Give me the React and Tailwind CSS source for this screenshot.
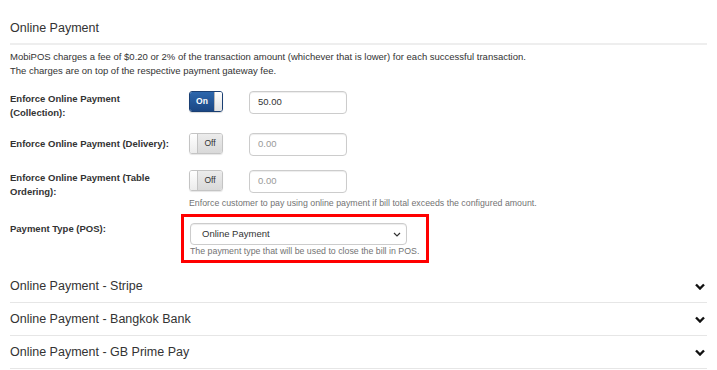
const Toggle = ({ on }) => {
    if (on) {
        return (
            <div className="flex w-[34px] h-[21px] rounded-[3px] border border-[#1a3f73] overflow-hidden shadow-[0_1px_1px_rgba(0,0,0,0.15)]">
                <div className="flex-1 flex items-center justify-center bg-gradient-to-b from-[#2d67ad] to-[#1b4784] text-white text-[8.5px] font-bold">On</div>
                <div className="w-[8px] bg-gradient-to-b from-[#ffffff] to-[#e2e2e2] border-l border-[#b8b8b8]"></div>
            </div>
        );
    }
    return (
        <div className="flex w-[34px] h-[21px] rounded-[3px] border border-[#c4c4c4] overflow-hidden shadow-[0_1px_1px_rgba(0,0,0,0.1)]">
            <div className="w-[8px] bg-gradient-to-b from-[#ffffff] to-[#ececec] border-r border-[#c4c4c4]"></div>
            <div className="flex-1 flex items-center justify-center bg-gradient-to-b from-[#ececec] to-[#d9d9d9] text-[#333] text-[8.5px]">Off</div>
        </div>
    );
};

const Field = ({ value, placeholder }) => (
    <div className="ml-[26px] w-[98px] h-[23px] rounded-[4px] border border-[#cccccc] shadow-[inset_0_1px_1px_rgba(0,0,0,0.075)] flex items-center px-[8px] text-[9.5px]">
        {value ? <span className="text-[#333]">{value}</span> : <span className="text-[#999]">{placeholder}</span>}
    </div>
);

const Label = ({ children, className }) => (
    <div className={`w-[179px] shrink-0 ${className}`}>
        <div className="w-[164px] text-[9.5px] leading-[14px] font-bold">{children}</div>
    </div>
);

const Chevron = () => (
    <svg width="10" height="7" viewBox="0 0 10 7" fill="none">
        <path d="M1 1.5 L5 5.5 L9 1.5" stroke="#111" strokeWidth="2.4" />
    </svg>
);

const sections = ["Online Payment - Stripe", "Online Payment - Bangkok Bank", "Online Payment - GB Prime Pay"];

export default function App() {
    return (
        <div className="w-[717px] h-[370px] overflow-hidden bg-white px-[10px] text-[#333]" style={{ fontFamily: '"Liberation Sans", Arial, sans-serif' }}>
            <div className="pt-[20px] pb-[7px] border-b-2 border-[#eeeeee] text-[12.5px] leading-[16px]">Online Payment</div>

            <div className="mt-[5px] text-[9.5px] leading-[14px]">
                <div>MobiPOS charges a fee of $0.20 or 2% of the transaction amount (whichever that is lower) for each successful transaction.</div>
                <div>The charges are on top of the respective payment gateway fee.</div>
            </div>

            <div className="mt-[13px] flex items-start mb-[13px]">
                <Label className="pt-[1px]">Enforce Online Payment (Collection):</Label>
                <Toggle on />
                <Field value="50.00" />
            </div>

            <div className="flex items-start mb-[14px]">
                <Label className="pt-[4px]">Enforce Online Payment (Delivery):</Label>
                <Toggle />
                <Field placeholder="0.00" />
            </div>

            <div className="flex items-start">
                <Label className="pt-[1px]">Enforce Online Payment (Table Ordering):</Label>
                <div className="flex flex-col">
                    <div className="flex">
                        <Toggle />
                        <Field placeholder="0.00" />
                    </div>
                    <div className="mt-[5px] text-[8.8px] leading-[11px] text-[#737373] whitespace-nowrap">Enforce customer to pay using online payment if bill total exceeds the configured amount.</div>
                </div>
            </div>

            <div className="mt-[5px] flex items-start">
                <div className="w-[171px] text-[9.5px] leading-[14px] font-bold pt-[8px]">Payment Type (POS):</div>
                <div className="w-[248px] border-[3px] border-[#ff0000] pt-[6px] pl-[6px] pb-[3px]">
                    <div className="w-[217px] h-[22px] rounded-[4px] border border-[#cccccc] shadow-[inset_0_1px_1px_rgba(0,0,0,0.075)] flex items-center justify-between pl-[11px] pr-[5px] text-[9.5px]">
                        <span>Online Payment</span>
                        <svg width="8" height="5" viewBox="0 0 8 5" fill="none">
                            <path d="M1 1 L4 4 L7 1" stroke="#333" strokeWidth="1.2" />
                        </svg>
                    </div>
                    <div className="mt-[1px] text-[8.8px] leading-[11px] text-[#737373] whitespace-nowrap">The payment type that will be used to close the bill in POS.</div>
                </div>
            </div>

            <div className="mt-[7px]">
                {sections.map((s) => (
                    <div key={s} className="h-[33px] flex items-center justify-between border-b border-[#e6e6e6] text-[12.5px] pr-[2px]">
                        <span>{s}</span>
                        <Chevron />
                    </div>
                ))}
            </div>
        </div>
    );
}
